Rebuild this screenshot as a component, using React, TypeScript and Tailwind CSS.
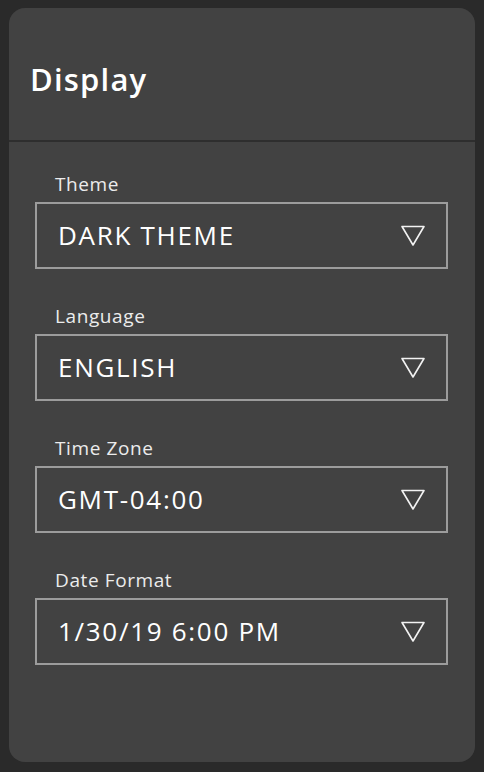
const fields = [
  { label: 'Theme', value: 'DARK THEME' },
  { label: 'Language', value: 'ENGLISH' },
  { label: 'Time Zone', value: 'GMT-04:00' },
  { label: 'Date Format', value: '1/30/19 6:00 PM' },
];

function Caret() {
  return (
    <svg width="26" height="22" viewBox="0 0 26 22" fill="none" className="shrink-0">
      <polygon points="2,1.5 24,1.5 13,20" stroke="#f2f2f2" strokeWidth="1.6" strokeLinejoin="round" />
    </svg>
  );
}

export default function App() {
  return (
    <div
      className="w-[484px] h-[772px] bg-[#2a2a2a] pt-[8px] pl-[9px]"
      style={{ fontFamily: '"Open Sans", "Liberation Sans", sans-serif' }}
    >
      <div className="w-[466px] h-[754px] bg-[#424242] rounded-[16px] overflow-hidden">
        {/* Header */}
        <div className="h-[134px] flex items-center pt-[10px] pl-[21px] border-b-2 border-[#2e2e2e]">
          <h1 className="text-[31px] font-semibold text-white tracking-[1.2px]">Display</h1>
        </div>

        {/* Fields */}
        <div className="pt-[31px] pl-[26px] pr-[27px] flex flex-col gap-[36px]">
          {fields.map((f) => (
            <div key={f.label}>
              <div className="pl-[20px] text-[19px] leading-[22px] text-[#ececec] tracking-[0.6px] mb-[7px]">{f.label}</div>
              <div className="h-[67px] border-2 border-[#9c9c9c] flex items-center justify-between pl-[21px] pr-[20px]">
                <span className="text-[26px] text-white tracking-[1.7px]">{f.value}</span>
                <Caret />
              </div>
            </div>
          ))}
        </div>
      </div>
    </div>
  );
}
